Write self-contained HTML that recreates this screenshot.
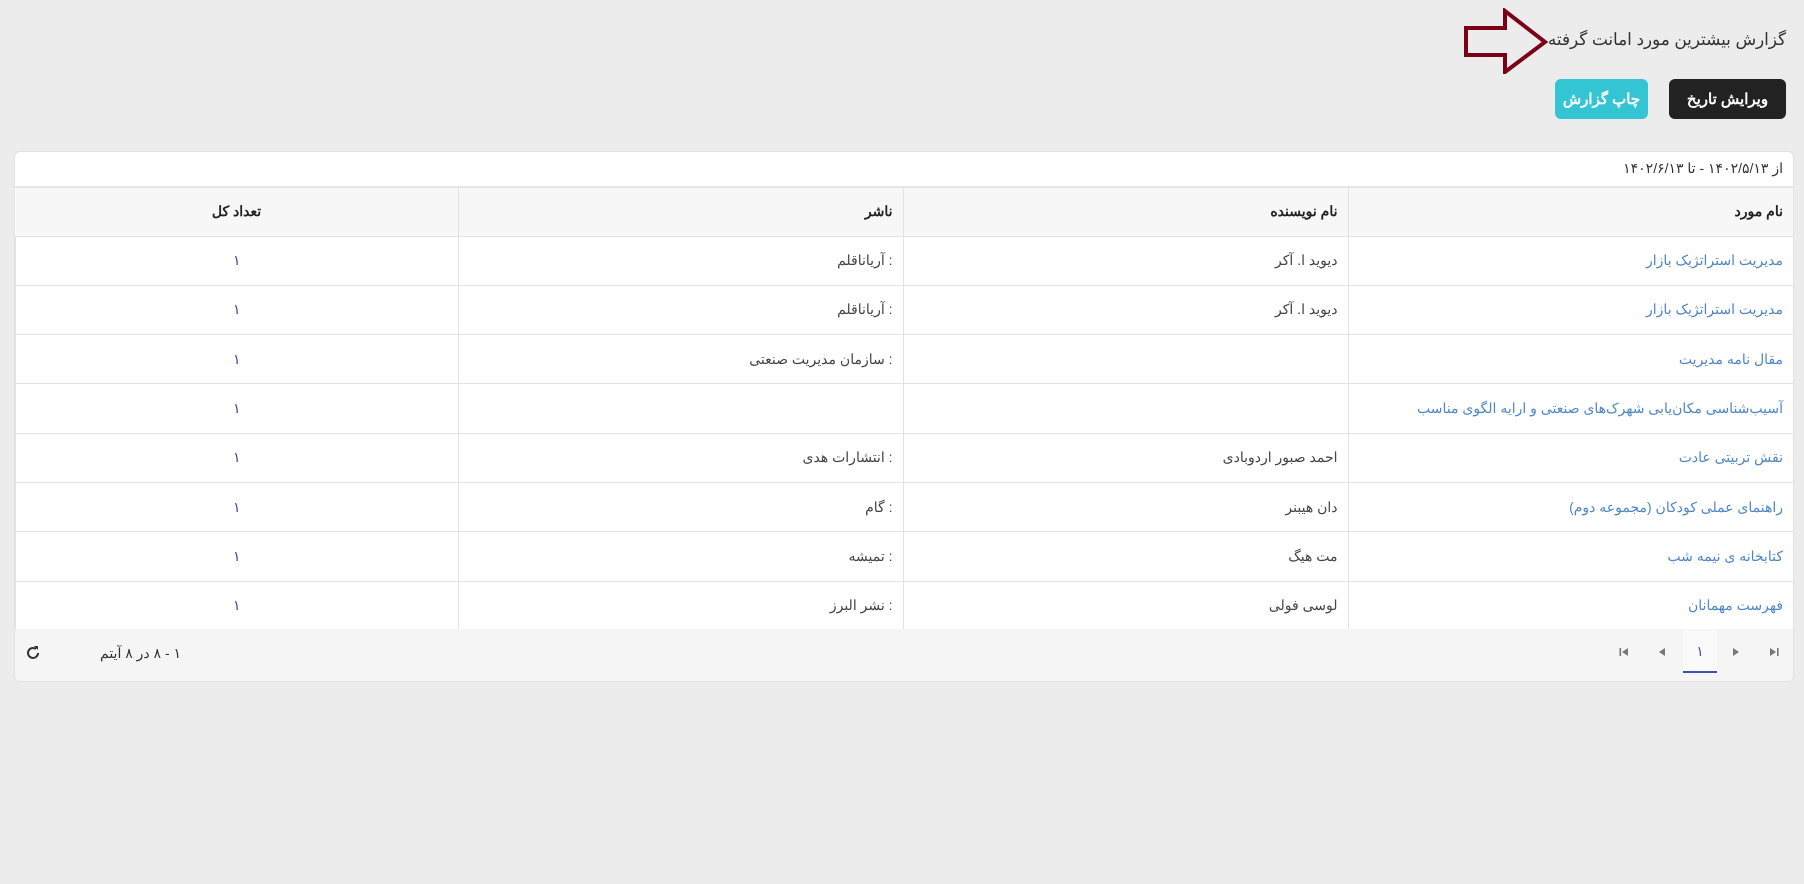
<!DOCTYPE html>
<html lang="fa" dir="rtl"><head><meta charset="utf-8">
<style>
*{box-sizing:border-box;margin:0;padding:0}
body{width:1804px;height:884px;overflow:hidden;background:#ececec;font-family:"Liberation Sans","Noto Sans CJK SC",sans-serif;color:#333;position:relative}
.title{position:absolute;right:18px;top:29px;font-size:16.8px;color:#333;white-space:nowrap}
.arrow{position:absolute;left:1463px;top:8px}
.btn{position:absolute;top:79px;height:40px;border-radius:6px;color:#fff;font-weight:bold;font-size:15px;display:flex;align-items:center;justify-content:center}
.b1{right:18px;width:117px;background:#222}
.b2{left:1555px;width:93px;background:#33c5d4}
.card{position:absolute;left:14px;top:151px;width:1780px;height:531px;background:#fff;border:1px solid #e2e2e2;border-radius:6px;overflow:hidden}
.date{height:36px;padding:8px 10px 0;font-size:14px;border-bottom:2px solid #e6e6e6;direction:rtl}
table{border-collapse:collapse;width:100%;table-layout:fixed;font-size:14px}
th{height:48px;background:#f7f7f7;text-align:right;padding-right:10px;font-weight:bold;color:#222;border-left:1px solid #e3e3e3;border-bottom:1px solid #e3e3e3}
td{height:49.3px;text-align:right;padding-right:10px;border-left:1px solid #e3e3e3;border-bottom:1px solid #e3e3e3;color:#444}
td.l{color:#4f86c6}
td.n{text-align:center;padding:0;color:#4a3f9a}
th.n{text-align:center;padding:0}
.foot{position:absolute;left:0;right:0;bottom:0;height:52px;background:#f5f5f5}
.pg{position:absolute;top:2px;width:34px;height:42px;display:flex;align-items:center;justify-content:center;color:#666;font-size:14px;border-radius:5px}
.info{position:absolute;left:85px;top:16px;font-size:14px;color:#333}
</style></head><body>
<div class="title">گزارش بیشترین مورد امانت گرفته</div>
<svg class="arrow" width="90" height="66" viewBox="0 0 90 66"><path d="M3 20 H42 V3 L82 34 L42 64 V47 H3 Z" fill="none" stroke="#7a0017" stroke-width="4" stroke-linejoin="miter"/></svg>
<div class="btn b1">ویرایش تاریخ</div>
<div class="btn b2">چاپ گزارش</div>
<div class="card">
<div class="date">از ۱۴۰۲/۵/۱۳ - تا ۱۴۰۲/۶/۱۳</div>
<table>
<colgroup><col style="width:445px"><col style="width:445px"><col style="width:445px"><col></colgroup>
<tr><th>نام مورد</th><th>نام نویسنده</th><th>ناشر</th><th class="n" style="border-left:none">تعداد کل</th></tr>
<tr><td class="l">مدیریت استراتژیک بازار</td><td>دیوید ا. آکر</td><td>: آریاناقلم</td><td class="n">۱</td></tr>
<tr><td class="l">مدیریت استراتژیک بازار</td><td>دیوید ا. آکر</td><td>: آریاناقلم</td><td class="n">۱</td></tr>
<tr><td class="l">مقال نامه مدیریت</td><td></td><td>: سازمان مدیریت صنعتی</td><td class="n">۱</td></tr>
<tr><td class="l">آسیب‌شناسی مکان‌یابی شهرک‌های صنعتی و ارایه الگوی مناسب</td><td></td><td></td><td class="n">۱</td></tr>
<tr><td class="l">نقش تربیتی عادت</td><td>احمد صبور اردوبادی</td><td>: انتشارات هدی</td><td class="n">۱</td></tr>
<tr><td class="l">راهنمای عملی کودکان (مجموعه دوم)</td><td>دان هیبنر</td><td>: گام</td><td class="n">۱</td></tr>
<tr><td class="l">کتابخانه ی نیمه شب</td><td>مت هیگ</td><td>: تمیشه</td><td class="n">۱</td></tr>
<tr><td class="l">فهرست مهمانان</td><td>لوسی فولی</td><td>: نشر البرز</td><td class="n">۱</td></tr>
</table>
<div class="foot">
<div class="pg" style="left:1742px"><svg width="10" height="10" viewBox="0 0 10 10"><path d="M1 1 L7 5 L1 9Z" fill="#777"/><rect x="8" y="1" width="1.6" height="8" fill="#777"/></svg></div>
<div class="pg" style="left:1704px"><svg width="10" height="10" viewBox="0 0 10 10"><path d="M2 1 L8 5 L2 9Z" fill="#777"/></svg></div>
<div class="pg" style="left:1668px;background:#fafafa;border-bottom:2px solid #3f51b5;border-radius:0;color:#5b4aa0">۱</div>
<div class="pg" style="left:1630px"><svg width="10" height="10" viewBox="0 0 10 10"><path d="M8 1 L2 5 L8 9Z" fill="#777"/></svg></div>
<div class="pg" style="left:1592px"><svg width="10" height="10" viewBox="0 0 10 10"><rect x="0.5" y="1" width="1.6" height="8" fill="#777"/><path d="M9 1 L3 5 L9 9Z" fill="#777"/></svg></div>
<div class="info">۱ - ۸ در ۸ آیتم</div>
<svg style="position:absolute;left:10px;top:16px" width="16" height="16" viewBox="0 0 16 16"><path d="M13 8a5 5 0 1 1-2-4" fill="none" stroke="#333" stroke-width="2"/><path d="M9 1h4v4z" fill="#333"/></svg>
</div>
</div>
</body></html>
